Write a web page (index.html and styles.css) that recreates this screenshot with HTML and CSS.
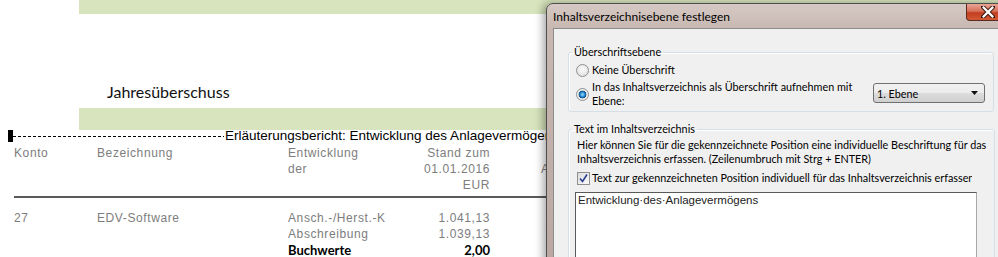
FILE: index.html
```html
<!DOCTYPE html>
<html lang="de">
<head>
<meta charset="utf-8">
<title>Inhaltsverzeichnisebene festlegen</title>
<link rel="stylesheet" href="styles.css">
</head>
<body>
<div class="doc">
  <div class="band band-top"></div>
  <div class="doc-title">Jahresüberschuss</div>
  <div class="band band-mid"></div>
  <div class="section">
    <span class="marker"></span>
    <span class="dashes"></span>
    <span class="section-text">Erläuterungsbericht: Entwicklung des Anlagevermögens</span>
  </div>
  <div class="tgrid thead">
    <div>Konto</div>
    <div>Bezeichnung</div>
    <div>Entwicklung<br>der</div>
    <div class="num">Stand zum<br>01.01.2016<br>EUR</div>
    <div></div>
    <div class="next"><br>Abgänge</div>
  </div>
  <div class="rule"></div>
  <div class="tgrid trow">
    <div>27</div>
    <div>EDV-Software</div>
    <div>Ansch.-/Herst.-K<br>Abschreibung<br><b>Buchwerte</b></div>
    <div class="num">1.041,13<br>1.039,13<br><b>2,00</b></div>
  </div>
</div>

<div class="dialog">
  <div class="titlebar">
    <span class="title">Inhaltsverzeichnisebene festlegen</span>
    <span class="close">
      <svg width="14" height="12" viewBox="0 0 14 12"><path d="M2 1 L12 11 M12 1 L2 11" stroke="#3a1a12" stroke-width="4.2" stroke-linecap="square"/><path d="M2.6 1.6 L11.4 10.4 M11.4 1.6 L2.6 10.4" stroke="#fff" stroke-width="2.2" stroke-linecap="square"/></svg>
    </span>
  </div>
  <div class="client">
    <fieldset class="group g1">
      <legend>Überschriftsebene</legend>
      <div class="opt opt1"><span class="radio"></span><span>Keine Überschrift</span></div>
      <div class="opt2">
        <div class="opt"><span class="radio on"></span><span class="two">In das Inhaltsverzeichnis als Überschrift aufnehmen mit<br>Ebene:</span></div>
        <div class="select"><span>1. Ebene</span><svg width="7" height="4" viewBox="0 0 7 4"><path d="M0 0 H7 L3.5 4 Z" fill="#111"/></svg></div>
      </div>
    </fieldset>
    <fieldset class="group g2">
      <legend>Text im Inhaltsverzeichnis</legend>
      <p class="desc">Hier können Sie für die gekennzeichnete Position eine individuelle Beschriftung für das<br>Inhaltsverzeichnis erfassen. (Zeilenumbruch mit Strg + ENTER)</p>
      <div class="chk"><span class="box"><svg width="11" height="11" viewBox="0 0 11 11"><path d="M2 5.5 L4.5 8.5 L9 1.5" fill="none" stroke="#2a3f8f" stroke-width="1.6"/></svg></span><span>Text zur gekennzeichneten Position individuell für das Inhaltsverzeichnis erfassen</span></div>
      <div class="textarea">Entwicklung·des·Anlagevermögens</div>
    </fieldset>
  </div>
</div>
</body>
</html>
```
FILE: styles.css
```css
* { box-sizing: border-box; margin: 0; padding: 0; }
html, body { width: 998px; height: 257px; overflow: hidden; background: #fff; }
body { position: relative; font-family: "Liberation Sans", Arial, sans-serif; }

/* document behind */
.band { margin-left: 79px; background: #d7e4bd; }
.band-top { height: 14px; }
.band-mid { height: 22px; }
.doc-title { height: 94px; padding: 68px 0 0 107px; font: 16px/20px Lato, "Liberation Sans", sans-serif; color: #111; }
.section { display: flex; align-items: center; height: 12px; padding-left: 8px; white-space: nowrap; }
.marker { width: 5px; height: 12px; background: #000; flex: none; }
.dashes { width: 211px; height: 1px; flex: none; background: repeating-linear-gradient(90deg, #000 0 3px, transparent 3px 5px); }
.section-text { margin-left: 1px; font: 13.5px/12px "Liberation Sans", Arial, sans-serif; color: #000; }

.tgrid { display: grid; grid-template-columns: 83px 191px 130px 72px 51px 120px; padding-left: 14px;
  font: 12px/16px "Liberation Sans", Arial, sans-serif; letter-spacing: 0.6px; color: #7d7d7d; }
.tgrid .num { text-align: right; }
.tgrid b { font: bold 13px/16px Lato, "Liberation Sans", sans-serif; color: #000; letter-spacing: 0; }
.thead { margin-top: 3px; }
.rule { margin: 3px 0 0 14px; height: 2px; background: #5a5a5a; }
.trow { margin-top: 12px; }

/* dialog window */
.dialog { position: absolute; left: 546px; top: 3px; width: 469px; height: 280px;
  background: linear-gradient(180deg, #d6c9c4 0, #c8b8b2 24px, #b9a6a0 100%);
  border: 1px solid #4e4e4e; border-radius: 7px 7px 0 0;
  box-shadow: -3px 0 8px rgba(0,0,0,.35);
  font-family: Lato, "Noto Sans", sans-serif; font-size: 10.8px; color: #000; white-space: nowrap; }
.titlebar { height: 24px; display: flex; align-items: center; padding-left: 6px; }
.title { font-size: 12px; color: #000; }
.close { margin-left: auto; margin-right: 5px; align-self: flex-start; width: 43px; height: 17px;
  display: flex; align-items: center; justify-content: center;
  background: linear-gradient(180deg, #e8a796 0, #d7705a 45%, #c23d20 55%, #d25a35 100%);
  border: 1px solid #5a2a20; border-top: none; border-radius: 0 0 4px 4px; }
.client { margin: 0 6px; height: 260px; background: #f0f0f0; border: 1px solid #8c8c8c; padding: 15px 0 0 14px; }

.group { width: 426px; border: 1px solid #d5dfe5; border-radius: 3px; padding: 0 8px 3px 7px; box-shadow: inset 1px 1px 0 #fff; }
.group legend { margin-left: -4px; padding: 0 2px; line-height: 16px; }
.opt { display: flex; align-items: center; line-height: 16px; }
.opt1 { margin-top: 2px; }
.radio { width: 13px; height: 13px; border-radius: 50%; margin-right: 3px; flex: none;
  border: 1px solid #8e8f8f; background: radial-gradient(circle at 50% 40%, #fdfdfd, #d8d8d8); }
.radio.on { background: radial-gradient(circle at 50% 50%, #6fc1f1 0 1px, #1f7fc7 2.5px, #0e4f86 3.6px, #ececec 4.2px, #fafafa 100%); }
.opt2 { display: flex; justify-content: space-between; align-items: flex-start; margin-top: 2px; }
.two { line-height: 14px; }
.select { margin-top: 3px; width: 112px; height: 20px; display: flex; align-items: center; justify-content: space-between;
  padding: 0 6px 0 3px; border: 1px solid #707070; border-radius: 3px;
  background: linear-gradient(180deg, #f2f2f2 0, #ebebeb 50%, #dddddd 50%, #cfcfcf 100%); }

.g2 { margin-top: 9px; }
.desc { line-height: 14px; padding: 1px 0 0 1px; }
.chk { display: flex; align-items: center; margin-top: 4px; line-height: 16px; width: 396px; overflow: hidden; padding-left: 1px; }
.box { width: 13px; height: 13px; flex: none; margin-right: 2px; border: 1px solid #8e8f8f;
  background: linear-gradient(135deg, #dcdcdc, #fbfbfb); display: flex; align-items: center; justify-content: center; }
.textarea { margin: 6px 0 0 -1px; width: 402px; height: 80px; background: #fff;
  border: 1px solid; border-color: #5a5a5a #a8a8a8 #a8a8a8 #5a5a5a;
  padding-left: 2px; font: 11.5px/15px "Liberation Sans", Arial, sans-serif; color: #222; }
```
